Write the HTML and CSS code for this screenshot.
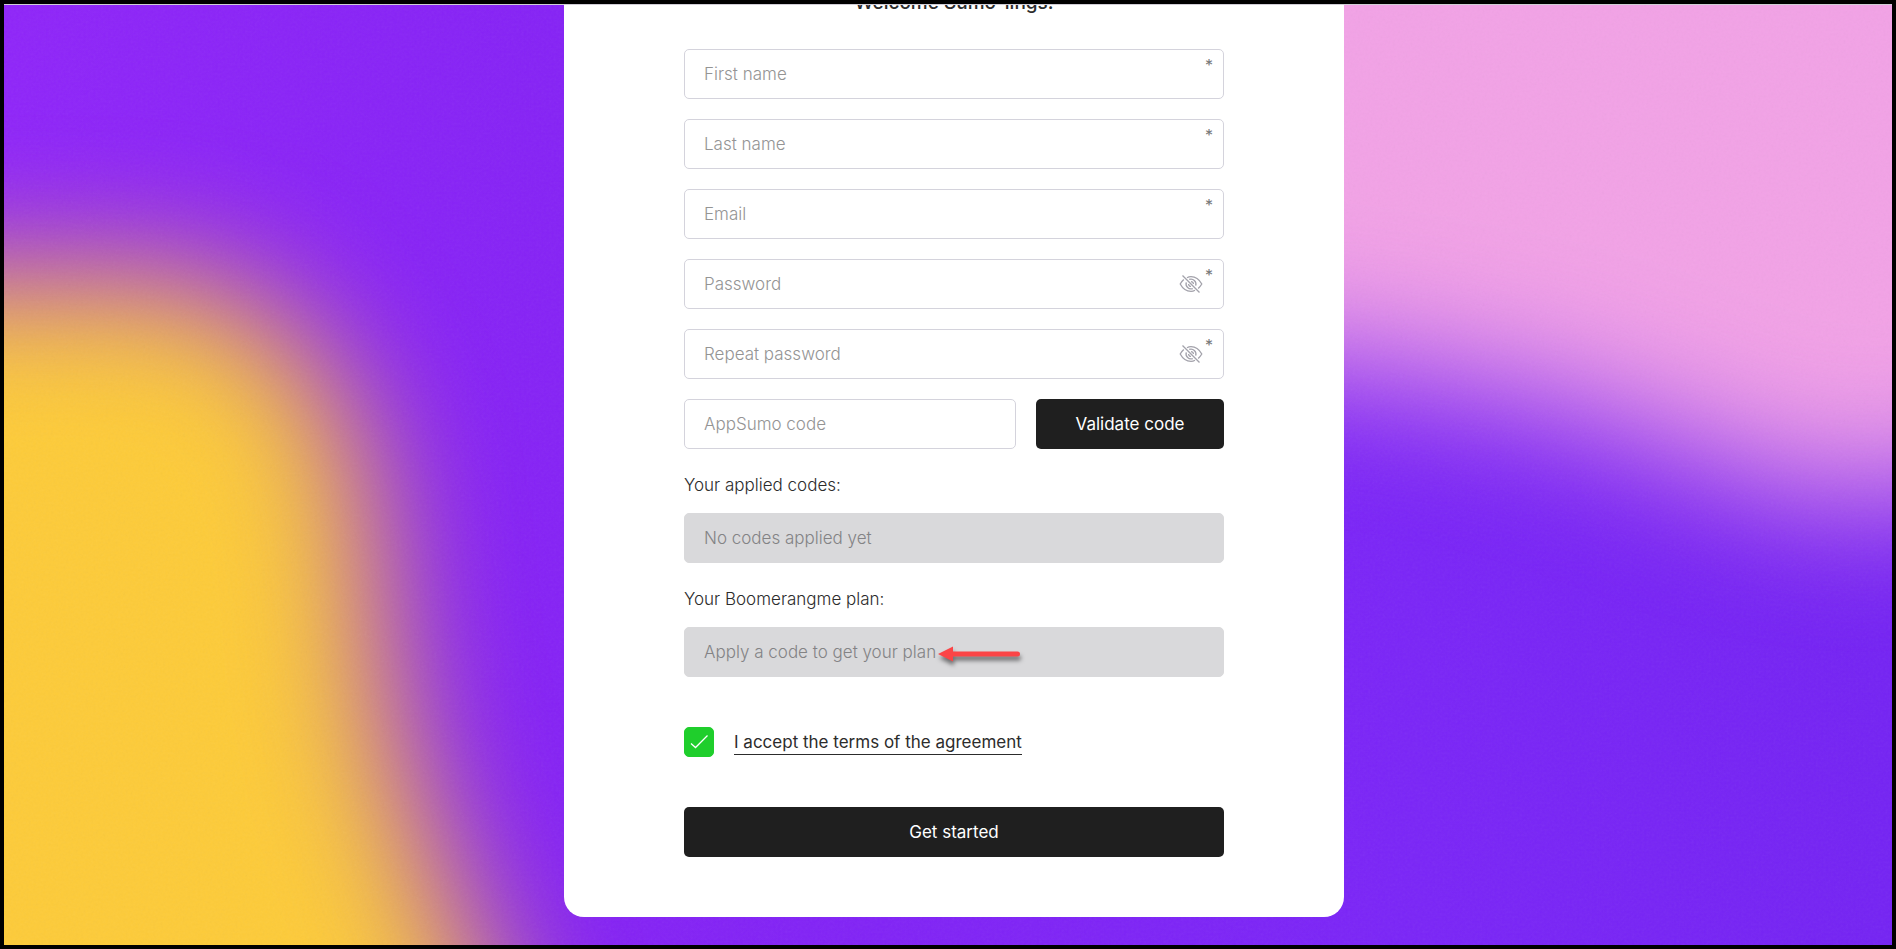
FILE: index.html
```
<!DOCTYPE html>
<html lang="en">
<head>
    <meta charset="UTF-8">
    <meta name="viewport" content="width=device-width, initial-scale=1.0">
    <title>Boomerangme - Sign up</title>
    <link rel="stylesheet" href="styles.css">
</head>
<body>
    <svg class="backdrop" viewBox="0 0 1896 949" preserveAspectRatio="none" aria-hidden="true">
        <defs>
            <linearGradient id="purple" x1="0" y1="0" x2="1" y2="0">
                <stop offset="0" stop-color="#8f25f9"/>
                <stop offset="0.3" stop-color="#8522f5"/>
                <stop offset="0.75" stop-color="#7a25f7"/>
                <stop offset="1" stop-color="#7423f3"/>
            </linearGradient>
            <filter id="soft" x="-20%" y="-20%" width="140%" height="140%" color-interpolation-filters="sRGB">
                <feGaussianBlur stdDeviation="68"/>
            </filter>
            <filter id="grain" x="0" y="0" width="100%" height="100%">
                <feTurbulence type="fractalNoise" baseFrequency="0.4" numOctaves="2"/>
                <feColorMatrix type="saturate" values="0"/>
            </filter>
        </defs>
        <rect width="1896" height="949" fill="url(#purple)"/>
        <path filter="url(#soft)" fill="#fdcb39" d="M-300 275H150C250 282 325 350 355 450C375 520 375 620 385 690C398 780 430 850 460 930L560 1200H-300Z"/>
        <path filter="url(#soft)" fill="#f2a2e6" d="M900 -300H2200V440C1990 460 1900 510 1820 492C1720 470 1640 424 1560 404C1480 384 1400 372 1340 362L900 330Z"/>
        <rect width="1896" height="949" filter="url(#grain)" opacity="0.06"/>
    </svg>

    <main class="page">
        <form class="card">
            <h1 class="title">Welcome Sumo-lings!</h1>

            <div class="fields">
                <div class="field">
                    <input type="text" class="input" placeholder="First name" aria-label="First name">
                    <span class="required">*</span>
                </div>
                <div class="field">
                    <input type="text" class="input" placeholder="Last name" aria-label="Last name">
                    <span class="required">*</span>
                </div>
                <div class="field">
                    <input type="email" class="input" placeholder="Email" aria-label="Email">
                    <span class="required">*</span>
                </div>
                <div class="field">
                    <input type="password" class="input" placeholder="Password" aria-label="Password">
                    <button type="button" class="eye" aria-label="Show password">
                        <svg viewBox="0 0 24 20">
                            <path d="M8 3.700C9.200 3 10.500 2.600 12 2.600c4.600 0 8.400 3 10.800 7.400c-1 1.700-2.200 3.200-3.600 4.400M16 16.300c-1.200.7-2.600 1.100-4 1.100c-4.600 0-8.400-3-10.800-7.400C2.200 8.300 3.400 6.800 4.800 5.600"/>
                            <path d="M10.200 5.400a5 5 0 0 1 6.500 6.200M13.800 14.600a5 5 0 0 1-6.500-6.200M12 7.600a2.400 2.400 0 0 1 2.400 2.400M12 12.400a2.400 2.400 0 0 1-2.400-2.400M3.500 1.500L20.500 18.500"/>
                        </svg>
                    </button>
                    <span class="required">*</span>
                </div>
                <div class="field">
                    <input type="password" class="input" placeholder="Repeat password" aria-label="Repeat password">
                    <button type="button" class="eye" aria-label="Show password">
                        <svg viewBox="0 0 24 20">
                            <path d="M8 3.700C9.200 3 10.500 2.600 12 2.600c4.600 0 8.400 3 10.800 7.400c-1 1.700-2.200 3.200-3.600 4.400M16 16.300c-1.200.7-2.600 1.100-4 1.100c-4.600 0-8.400-3-10.800-7.400C2.200 8.300 3.400 6.800 4.800 5.600"/>
                            <path d="M10.200 5.400a5 5 0 0 1 6.500 6.200M13.800 14.600a5 5 0 0 1-6.500-6.200M12 7.600a2.400 2.400 0 0 1 2.400 2.400M12 12.400a2.400 2.400 0 0 1-2.400-2.400M3.500 1.500L20.500 18.500"/>
                        </svg>
                    </button>
                    <span class="required">*</span>
                </div>
                <div class="code-row">
                    <input type="text" class="input" placeholder="AppSumo code" aria-label="AppSumo code">
                    <button type="button" class="btn">Validate code</button>
                </div>
            </div>

            <label class="label" for="codes">Your applied codes:</label>
            <input type="text" id="codes" class="input" placeholder="No codes applied yet" disabled>

            <label class="label" for="plan">Your Boomerangme plan:</label>
            <div class="field">
                <input type="text" id="plan" class="input" placeholder="Apply a code to get your plan" disabled>
                <svg class="arrow" viewBox="0 0 84 20" aria-hidden="true">
                    <path d="M0 10L15 2.500V7.500H79.500a2.500 2.500 0 0 1 0 5H15V17.500Z"/>
                </svg>
            </div>

            <div class="terms">
                <span class="tick">
                    <input type="checkbox" id="accept" checked>
                    <svg viewBox="0 0 30 30" aria-hidden="true"><path d="M7 16.500L11.500 20.500L23.500 8.500"/></svg>
                </span>
                <label for="accept"><a href="#">I accept the terms of the agreement</a></label>
            </div>

            <button type="submit" class="btn">Get started</button>
        </form>
    </main>
</body>
</html>
```
FILE: styles.css
```
:root {
    --dark: #1f1f1f;
    --text: #2c2c2c;
    --muted: #949494;
    --border: #d4d3dc;
    --disabled: #d9d9db;
    --green: #1fce2c;
}

* {
    box-sizing: border-box;
}

body {
    position: relative;
    min-height: 100vh;
    margin: 0;
    border: 4px solid #000;
    overflow: hidden;
    font-family: Inter, 'Open Sans', sans-serif;
    font-size: 17px;
    font-weight: 300;
    line-height: 24px;
    color: var(--text);
}

.backdrop {
    position: absolute;
    top: 0;
    left: 0;
    width: 100%;
    height: 100%;
}

.page {
    position: relative;
    padding: 0 14px 28px 26px;
    border-top: 1px solid #d0cdd6;
    overflow: hidden;
}

.card {
    max-width: 780px;
    margin: -14px auto 0;
    padding: 0 120px 60px;
    background-color: #fff;
    border-radius: 0 0 20px 20px;
}

.title {
    margin: 0 0 34px;
    font-size: 19px;
    font-weight: 500;
    text-align: center;
}

.fields {
    display: flex;
    flex-direction: column;
    gap: 20px;
}

.field {
    position: relative;
}

.input {
    display: block;
    width: 100%;
    height: 50px;
    padding: 0 19px;
    border: 1px solid var(--border);
    border-radius: 5px;
    background-color: #fff;
    font: inherit;
    color: var(--text);
}

.input::placeholder {
    color: var(--muted);
    opacity: 1;
}

.input:disabled {
    border-color: var(--disabled);
    background-color: var(--disabled);
}

.input:disabled::placeholder {
    color: #838385;
}

.required {
    position: absolute;
    top: 8px;
    right: 11px;
    font-size: 16px;
    font-weight: 400;
    line-height: 16px;
    color: #777;
}

.eye {
    position: absolute;
    top: 15px;
    right: 21px;
    width: 24px;
    height: 20px;
    padding: 0;
    border: 0;
    background: none;
    cursor: pointer;
}

.eye svg {
    display: block;
    fill: none;
    stroke: #a3a2ab;
    stroke-width: 1.3;
}

.code-row {
    display: grid;
    grid-template-columns: 1fr 188px;
    gap: 20px;
}

.btn {
    width: 100%;
    height: 50px;
    border: 0;
    border-radius: 5px;
    background-color: var(--dark);
    font: inherit;
    font-weight: 400;
    color: #fff;
    cursor: pointer;
}

.label {
    display: block;
    margin: 24px 0 16px;
}

.arrow {
    position: absolute;
    top: 17px;
    left: 254px;
    width: 84px;
    height: 20px;
    fill: #fb4446;
    overflow: visible;
    filter: drop-shadow(1px 4px 2px rgba(0, 0, 0, 0.5));
}

.terms {
    display: flex;
    align-items: center;
    gap: 20px;
    margin: 50px 0;
    font-weight: 400;
}

.tick {
    position: relative;
    width: 30px;
    height: 30px;
}

.tick input {
    appearance: none;
    display: block;
    width: 30px;
    height: 30px;
    margin: 0;
    border: 1px solid var(--border);
    border-radius: 5px;
}

.tick input:checked {
    border-color: var(--green);
    background-color: var(--green);
}

.tick svg {
    position: absolute;
    top: 0;
    left: 0;
    width: 30px;
    height: 30px;
    fill: none;
    stroke: #fff;
    stroke-width: 1.3;
    pointer-events: none;
}

.terms a {
    display: block;
    border-bottom: 1px solid var(--text);
    color: inherit;
    text-decoration: none;
}

@media (max-width: 820px) {
    .page {
        padding: 0 20px 28px;
    }

    .card {
        padding: 0 24px 60px;
    }
}
```
